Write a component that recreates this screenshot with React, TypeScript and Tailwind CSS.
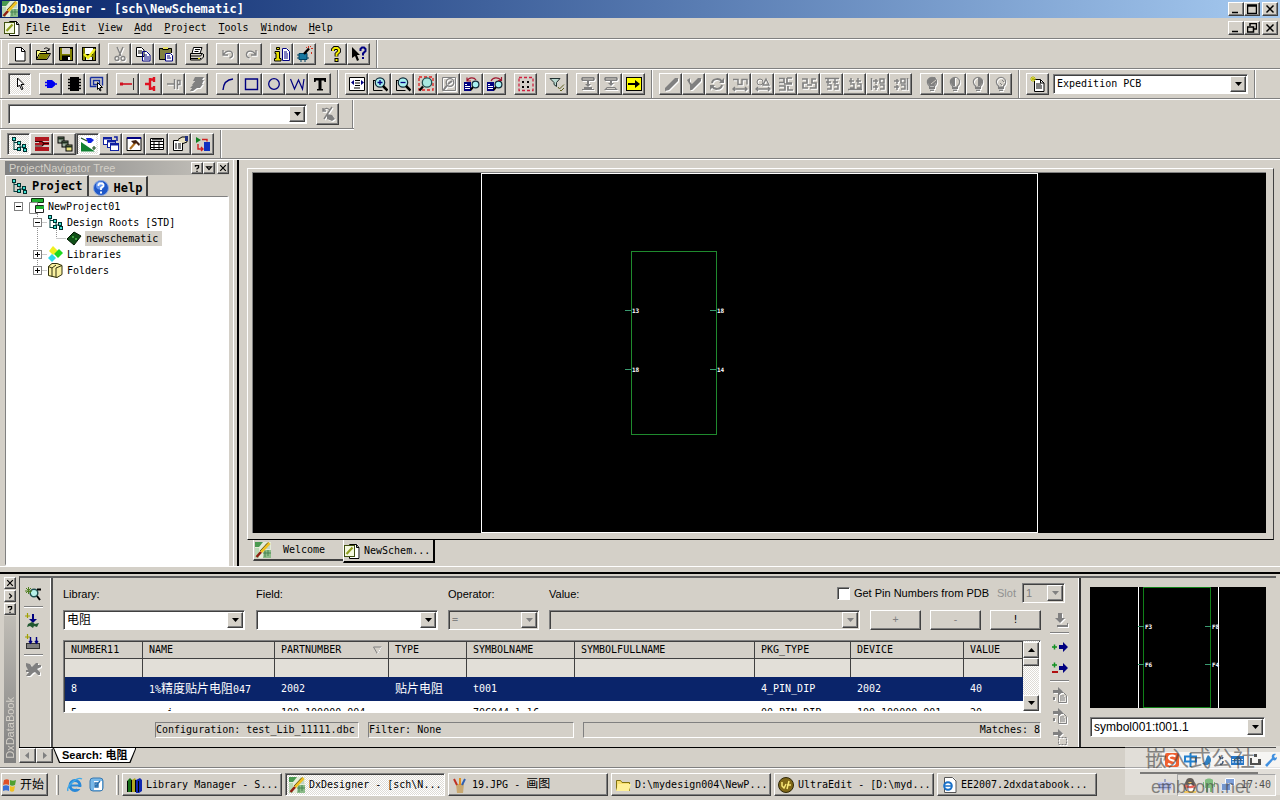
import React from "react";
import type { ReactNode } from "react";

const mono = "font-['DejaVu_Sans_Mono','Noto_Sans_CJK_SC',monospace]";
const sans = "font-['Liberation_Sans','Noto_Sans_CJK_SC',sans-serif]";
const raised =
  "border border-t-white border-l-white border-b-[#404040] border-r-[#404040] shadow-[inset_-1px_-1px_0_#808080]";
const sunken =
  "border border-t-[#808080] border-l-[#808080] border-b-white border-r-white shadow-[inset_1px_1px_0_#404040]";
const thinSunken = "border border-t-[#808080] border-l-[#808080] border-b-white border-r-white";
const dither = "bg-[repeating-conic-gradient(#ffffff_0_25%,#dedbd5_0_50%)] bg-[length:2px_2px]";

const f = (d: string, fill: string) => <path d={d} fill={fill} />;
const s = (d: string, stroke = "#000", w = 1) => <path d={d} fill="none" stroke={stroke} strokeWidth={w} />;

const G = "#808080";
const N = "#000080";
const lens = (
  <>
    {s("M1.500 4v10.500h9M1.500 4.500h2")}
    <circle cx="8" cy="6.500" r="4.700" fill="#a8f0f0" stroke="#102838" strokeWidth="1.200" />
    {s("M11 10l4.500 4.500", "#000", 2.500)}
  </>
);
const bulb = (inner: ReactNode) => (
  <>
    <path d="M5.500 10C3 8 3 5 4 3.500 6 0.500 10 0.500 12 3.500c1 1.500 1 4.500-1.500 6.500v1h-5z" fill="none" stroke={G} strokeWidth="1.200" />
    {inner}
    {f("M5 11h6v2H5zM6 13.500h4V15H6z", G)}
  </>
);
const rootsIcon = (
  <>
    {s("M3 3v11M3 6.500h5M3 13.500h5M9 7v4h4", "#004040")}
    {[[1, 1], [6, 5], [6, 11], [11, 8], [12, 12]].map(([x, y]) => (
      <rect key={`${x}-${y}`} x={x + 0.5} y={y + 0.5} width="3" height="3" fill="#40e0d0" stroke="#003030" />
    ))}
  </>
);
const pencilLogo = (
  <>
    {f("M0 0h16v16H0z", "#e4ecd8")}
    {f("M0 0h8l-4 5H0z", "#4a9a50")}
    {f("M9 8h7v8H8z", "#8cbc88")}
    {f("M10 2h5v5h-5z", "#c0d4c8")}
    {f("M0 6h4v10H0z", "#b9d8b4")}
    {s("M10 9v6M13 8v6M8 11h8", "#3a7a48", 0.800)}
    {s("M14.500 1L6 10", "#f0c020", 3)}
    {s("M6 10L1.500 15", "#902010", 2.600)}
    {s("M13 0.500L5 9", "#605010", 0.900)}
  </>
);
const schemDoc = (
  <>
    {f("M5 1h8l3 3v12H5z", "#fff")}
    {s("M5.500 1.500h7l2.500 3v11H5.500zM12.500 1.500v3H15", "#000")}
    <rect x="0.500" y="2.500" width="10" height="11" fill="#f4f8e0" stroke="#405010" />
    {s("M2.500 11l6-6.500", "#90a020", 2.200)}
  </>
);
const magDoc = (arrow: string) => (
  <>
    <rect x="0" y="6" width="7" height="9" fill={N} />
    {s("M1 8.500h2M1 10.500h5M1 12.500h5", "#fff")}
    <circle cx="11.500" cy="8.500" r="3.400" fill="#a8f0f0" stroke="#102838" strokeWidth="1.200" />
    {s("M9 11L6.500 14", "#000", 2)}
    {s(arrow, "#a01830", 1.200)}
  </>
);
const pageIn = (
  <>
    {s("M6.500 5.500h5l3 3v7h-8zM8 9h4M8 11h5M8 13h5", G)}
    {f("M1 3h5V0l5 4.500L6 9V6H1zM1 10h2v3H1z", G)}
  </>
);

const icons: Record<string, ReactNode> = {
  new: <>{f("M3 1h7l3 3v11H3z", "#fff")}{s("M3.500 1.500h6l3.500 3.500v10H3.500zM9.500 1.500v4H13")}</>,
  open: <>{f("M1 4h4l1 1h6v3H5l-4 6z", "#ffff80")}{s("M1.500 13.500v-9h3l1 1h6v2M1.500 13.500l3-6h11l-3.500 6zM9 3c2-2 4-1 5 1M14 2v2.500h-2.500")}{f("M5 8h9.500l-3 5H2.500z", "#808000")}</>,
  save: <>{f("M1 1h14v14H2L1 14z", "#000")}{f("M2 2h2v12H2zM12 3h2v11h-2zM4 8h8v1.500H4z", "#808000")}{f("M4 2h8v6H4z", "#d4d0c8")}{f("M10 11h2v3h-2z", "#fff")}</>,
  saveCheck: <>{f("M1 1h14v14H2L1 14z", "#000")}{f("M2 2h2v12H2zM12 3h2v11h-2zM4 9h8v2H4z", "#808000")}{f("M4 2h8v6H4z", "#fff")}{f("M5 11h6v3H5z", "#eee")}{s("M3 8l4 4 7-9", "#f0f020", 2.400)}</>,
  cut: <>{s("M5 1l4 9M11 1L7 10", G, 1.400)}<circle cx="5" cy="12.500" r="2" fill="none" stroke={G} strokeWidth="1.300" /><circle cx="11" cy="12.500" r="2" fill="none" stroke={G} strokeWidth="1.300" /></>,
  copy: <>{f("M1 1h6l2 2v8H1zM7 5h5l3 3v7H7z", "#fff")}{s("M1.500 1.500h5l2.500 2.500v6.500H1.500zM3 5h4M3 7h4")}{s("M7.500 5.500h4l3.500 3.500v6H7.500zM9 9h3M9 11h5M9 13h5", N)}</>,
  paste: <>{f("M1 2h13v12H1z", "#808040")}{s("M1.500 2.500h12v11h-12z")}{f("M5 1h5v3H5z", "#e8e060")}{s("M4.500 3.500h6")}{f("M7 7h8v8H7z", "#fff")}{s("M7.500 7.500h5l2 2v5.500h-7zM9 10h3M9 12h4", N)}</>,
  print: <>{f("M4 1h9l-2 6H3z", "#fff")}{s("M4.500 1.500h8.500l-2 6H3zM6 3.500h5M5.500 5.500h4")}{f("M1 7h13l1 2v4l-2 2H2l-1-2z", "#d4d0c8")}{s("M1.500 7.500h12l-2 2.500h-10zM1.500 10v4h10l3-3V8M2 12.500h10")}{f("M9 12h2v1H9z", "#e0e000")}</>,
  undo: <>{s("M3 4v5h5M3.500 8.500C6 4 12 4 12.500 8c.3 2-1 3.500-3 4", G, 1.300)}</>,
  redo: <>{s("M13 4v5H8M12.500 8.500C10 4 4 4 3.500 8c-.3 2 1 3.500 3 4", G, 1.300)}</>,
  info: <>{f("M2 1h4v3H2zM1 6h5v7h1v2H0v-2h2V8H1z", "#e8e000")}{s("M2.500 1.500h3v2h-3zM1 5.500h4.500v7H7v2.500H.5v-2.500H2v-5H1z")}{f("M8 2h5l3 3v10H8z", "#fff")}{s("M8.500 2.500h4l3 3v9h-7zM10 6h3M10 8h4M10 10h4M10 12h4", N)}</>,
  wizard: <>{f("M2 7h8v7H2z", "#1878a0")}{s("M2 7.500h8v6H2zM0 9h2M0 12h2M4 14v2M8 14v2M10 12h2", "#004060")}{s("M7 8l5-5.500", "#000", 2.400)}{f("M11 0h1v2h-1zM14 2h2v1h-2zM9 1h1v1H9zM14 6h1v2h-1zM13 0h1v1h-1z", "#d03020")}</>,
  help: <>{s("M5 5V3.500L6.500 2h3L11 3.500v2L8.500 8v2.500", "#000", 3.800)}{s("M5 5V3.500L6.500 2h3L11 3.500v2L8.500 8v2.500", "#f0e800", 2)}{f("M6.500 12h4v4h-4z", "#000")}{f("M7.500 13h2v2h-2z", "#f0e800")}</>,
  whats: <>{f("M1 1l8 8H6l2 5-2 1-2-5-3 2z", "#000")}{s("M9.500 5V3l1.500-1.500h2L14.500 3v2L12 7.500v2", N, 2)}{f("M11 11h2v2h-2z", N)}</>,
  arrow: <>{f("M5 2l7 7H9l2 4-1.500 1-2-4.500L5 11z", "#fff")}{s("M5.500 2v9l2-2 2 4.500 1.500-.5-2-4.500h3z")}</>,
  gate: <>{f("M4 4h5l3 2.500v3L9 12H4z", "#0000f0")}{s("M2 6.500h2M2 9.500h2M12 8h2", "#0000f0", 1.300)}</>,
  chip: <>{f("M4 1h9v14H4z", "#000")}{s("M2 3.500h13M2 6.500h13M2 9.500h13M2 12.500h13", "#000", 1.500)}</>,
  blockSel: <>{s("M1.500 1.500h12v8M1.500 1.500v9h6M4.500 4.500h6v4h-6z", "#1830a0", 1.400)}{f("M8 6l6 6h-3l1 3-1.500.5-1-3L8 14z", "#fff")}{s("M8.500 6.500v7l1.500-1.500 1 3 1-.5-1-3h2.500z")}</>,
  net: <>{s("M1 8h11", "#d01020", 1.600)}{f("M0 6.500h3v3H0z", "#d01020")}{s("M13.500 2v12", "#303030")}</>,
  bus: <>{s("M7 2v12M7 3.500h4M7 12.500h4M2 8h5M11 1v5M11 10v5", "#e01020", 2.400)}</>,
  probe: <>{s("M1 8h7M8.500 3v10M11.500 13V4.500h2.500v4h-2.500", G, 1.400)}</>,
  ripper: <>{f("M6 1h9l-2 3h2l-2 4h1l-3 4H8l-4 3H1l2-3H1l3-3H3l3-4H4z", G)}</>,
  arc: s("M3 14C3.500 7 7 3.500 13 3", N, 1.400),
  rect: s("M2.500 3h12v10.500h-12z", N, 1.400),
  circle: <circle cx="8" cy="8" r="5.300" fill="none" stroke={N} strokeWidth="1.300" />,
  zig: s("M1.500 3l4 10 4-9 4 9 1.500-10", N, 1.200),
  text: f("M2 2h12v4h-1.500L12 4.500H9.500V13H11v1.500H5V13h1.500V4.500H4L3.500 6H2z", "#000"),
  fit: <>{f("M1 2h14v12H1z", "#fff")}{s("M.5 1.500h15v13H.5z")}{s("M6 4.500h5M6 7h5M6 9.500h5M5 12h6")}{f("M2 6.500l3-2.500v5zM15 6.500L12 4v5z", N)}</>,
  zoomIn: <>{lens}{s("M8 4v5M5.500 6.500h5", N, 1.300)}</>,
  zoomOut: <>{lens}{s("M5.500 6.500h5", N, 1.300)}</>,
  zoomArea: <><rect x="1" y="1" width="14" height="13" fill="none" stroke="#e02020" strokeWidth="1.300" strokeDasharray="3 2" /><circle cx="9" cy="6.500" r="4.700" fill="#a8e8e0" stroke="#205050" strokeWidth="1.300" />{s("M5 10.500l-3.500 4", "#000", 2.300)}</>,
  zoomSel: <>{s("M1.500 1.500h13v13h-13z", G)}<circle cx="9" cy="6.500" r="3.800" fill="none" stroke={G} strokeWidth="1.300" />{s("M6 9.500L2.500 14M7 8l4-3", G, 2)}</>,
  prev: magDoc("M3 5c2-4 7-4 9-1M3 1.500V5h4"),
  next: magDoc("M4 5c2-4 7-4 10-1M14.500 1v3.500H11"),
  grid: <><rect x="1" y="1.500" width="14" height="13" fill="none" stroke="#d02040" strokeWidth="1.300" strokeDasharray="3 2" />{f("M4 5h2v2H4zM9 5h2v2H9zM4 10h2v2H4zM9 10h2v2H9z", "#000")}</>,
  filter: <>{f("M1 2h10L7.500 6v4L5 8V6z", "#b8d8d0")}{s("M1 2.500h10L7.500 6.500v4L5 8.500v-2z", "#203030")}{s("M9 11l1.500 2L15 8.500M11 14l1 1 3-3", "#606020")}</>,
  down1: <>{f("M2 1h12l1 2-1 2H2L1 3zM7 5h2v3h2l-3 3-3-3h2zM4 11h8v2h2v1H2v-1h2z", G)}{s("M3 3h10", "#d4d0c8")}</>,
  down2: <>{f("M2 1h12l1 2-1 2H2L1 3zM7 5h2v2h2L8 10 5 7h2zM4 11h8l3 3H1z", G)}{s("M3 3h10M4 12.500h8", "#d4d0c8")}</>,
  go: <>{f("M0 1h16v14H0z", "#000")}{f("M1 2h14v12H1z", "#ffff00")}{s("M2 8h9", "#000", 2)}{f("M9 4l5 4-5 4z", "#000")}</>,
  pen: f("M12 2h3v3l-9 9-4 1v-3z", G),
  penV: f("M1 4l3-2v4l2 2 6-6h3v3l-9 9H4V9z", G),
  cyc: <>{s("M3 7C4 2 11 2 13 6M13 9c-1 5-8 5-10 1", G, 2)}{f("M10 7h5V2zM6 9H1v5z", G)}</>,
  w1: s("M1 3.500h5v5h4v-5h5v5M1 13h13M3 11l-2 2 2 2M13 11l2 2-2 2", G, 1.500),
  w2: <>{s("M1 13h13M3 11l-2 2 2 2M13 11l2 2-2 2M8 9l3-6 3 6z", G, 1.300)}<circle cx="5" cy="6" r="3" fill="none" stroke={G} /></>,
  w3: s("M1 2.500h5v4H1M9 2h5M9 2v5h5M1 10h6v4H1M10 10v4h5M6 8h8", G, 1.700),
  w4: s("M1 3h5v4H2v5h5M15 3h-4v4h4v5H9M6 9h5", G, 1.700),
  w5: s("M1 2.500h14M4 3v5M11 3v5M2 6h5M9 6h5M3 9h4v4H3M10 9h4v4h-4", G, 1.500),
  w6: s("M1 13.500h14M4 2v5M11 2v5M2 5h5M9 5h5M3 8h4v4H3M10 8h4v4h-4", G, 1.500),
  w7: s("M1.500 2v12M3 5h5M3 11h5M6 3v5M6 9v5M10 3h4v4h-4zM10 9h4v4h-4", G, 1.500),
  w8: s("M14.500 2v12M1 5h5M1 11h5M4 3v5M4 9v5M8 3h4v4H8zM8 9h4v4H8", G, 1.500),
  bulb1: bulb(<>{f("M5 2l6-1 2 4-3 5H6L3 6z", G)}{s("M7 8l5-4", "#d4d0c8")}</>),
  bulb2: bulb(f("M8 1v9H6L3 6l1-3z", G)),
  bulb3: bulb(f("M8 1v9h2l3-4-1-3z", G)),
  bulb4: bulb(s("M9 4l2 2M7 7l2 2", G)),
  brush: <>{s("M3 5c2-4 6-3 7 0M3 2v3h3M12 1L4 13", G, 1.400)}{f("M7 8l5 1 3 4-3 2-5-2z", G)}</>,
  newPage: <>{f("M4 3h7l3 3v10H4z", "#fff")}{s("M4.500 3.500h6l3.500 3.500v8.500H4.500zM6 8h5M6 10h6M6 12h6M10.500 3.500V7H14")}{s("M0 3h6M3 0v6M1 1l4 4M5 1L1 5", "#c0c000")}</>,
  roots: rootsIcon,
  layers: <>{f("M1 1h14v4H1zM1 7h9v2H1zM5 6h10v3H5zM1 11h14v4H1z", "#b01820")}{s("M1 5.500h7l2 2h5M1 10h7l2-2", "#300", 1.200)}</>,
  cascade: <>{[[1, 1], [5, 5], [9, 9]].map(([x, y]) => <g key={x}><rect x={x} y={y} width="6" height="6" fill={x === 9 ? "#e8e080" : "#a0b0a0"} stroke="#000" />{s(`M${x} ${y + 1.5}h6`, "#203020", 2)}</g>)}</>,
  scene: <>{f("M0 0h16v16H0z", "#fff")}{f("M1 6l14 9.500H1z", "#108030")}{f("M6 2h5l3 2-3 3H8z", "#1020e0")}{s("M1 2l6 3M12 12h4M14 10v4", "#205020", 1.200)}</>,
  windows: <>{[[0, 1], [4, 4], [7, 7]].map(([x, y]) => <g key={x}><rect x={x + 0.5} y={y + 0.5} width="8" height="7" fill="#fff" stroke="#1020a0" />{s(`M${x} ${y + 1.5}h9`, "#1020a0", 2)}</g>)}{s("M11 1h3v4", "#1020a0", 1.500)}</>,
  hammer: <>{f("M1 2h14v13H1z", "#fff")}{s("M1 1.500h14v13H1z", "#000")}{f("M1 1h14v2H1z", N)}{s("M4 13l6-7", "#b07020", 2)}{f("M5 5l5-1 4 4-1 2-3-3-2 1z", "#402010")}</>,
  calendar: <>{f("M1 2h14v12H1z", "#fff")}{s("M1.500 2.500h13v11h-13zM1 5.500h14M1 8.500h14M1 11.500h14M5 5v9M10 5v9M3 3.800h10")}</>,
  props: <>{f("M1 4h10v11H1z", "#fff")}{s("M1.500 4.500h9v10h-9zM3 8h2M6 8h3M3 10h2M6 10h3M3 12h2M6 12h3")}{f("M6 3l4-2h5v5l-4 1-4-1z", "#e8e0c0")}{s("M6 3.500L10 1h5v5l-4 1.500")}{f("M13 0h3v5h-3z", "#203080")}</>,
  swap: <>{f("M1 1l5 3-5 3z", "#108020")}{f("M9 6h6v9H9z", "#1030c0")}{s("M7 3.500h5v2M3 8v5h5M6 11l2 2-2 2", "#d02020", 1.400)}</>,
  helpBall: <><circle cx="8" cy="8" r="7.500" fill="#2058c8" stroke="#90a8d8" /><circle cx="7" cy="5.500" r="4" fill="#6898f0" />{s("M5.500 6V4.500l1-1h3l1 1v1.500L8 8v2", "#fff", 1.800)}{f("M7 11.500h2v2H7z", "#fff")}</>,
  project: <>{f("M4 1h12v3H4z", "#20b030")}{s("M3.500.5h12v4h-12z", "#103010")}{f("M1 6h8v9H1z", "#fff")}{s("M1.500 4.500h8v11h-8z", "#888")}{f("M8 8h8v7H8z", "#fff")}{s("M7.500 7.500h8v7h-8z", "#222")}{f("M8 8h8v3H8z", "#20b030")}</>,
  board: <>{f("M1 9l7-7 7 4-7 9z", "#105018")}{s("M1 9l7-7 7 4-7 9z", "#001800")}{f("M6 6h2v2H6zM9 8h2v2H9z", "#40a040")}</>,
  libs: <>{f("M6 0l5 5-5 4-4-4z", "#f0f020")}{f("M12 3l4 4-5 5-4-4z", "#20d820")}{f("M5 8l4 4-4 4-4-4z", "#30d8e8")}</>,
  folders: <>{f("M1 4l4-3h6l4 2v9l-5 4-9-2z", "#f8f0a0")}{s("M1.500 4.500L5 1.500h5l5 2v9l-5 3-8.500-2zM1.500 4.500L5 6v9M5 6l4-3M9 6v9.500M9 6l6-2.500", "#303010")}</>,
  findStar: <><circle cx="9" cy="7" r="3.800" fill="#b8f0e8" stroke="#205050" strokeWidth="1.500" />{s("M12 10l3 4M12 3.500h4", "#000", 2)}{s("M0 5h7M3.500 1v7M1 2l5 5M6 2L1 7", "#508020")}</>,
  placeStar: <>{s("M0 3h5M2.500 0v5", "#a0a000", 1.200)}{f("M7 1h2v5h3L8 10 4 6h3z", N)}{f("M3 11l4-2 3 2 4-1-2 4-3-1-1 2-3-2-3 1z", "#205830")}</>,
  gridStar: <>{s("M0 3h5M2.500 0v5", "#a0a000", 1.200)}{f("M1 9h14v6H1z", "#303030")}{s("M2 11h12M2 13h12", "#ccc")}{s("M5.500 3v6M11.500 3v6M4 7l1.500 2L7 7M10 7l1.500 2L13 7", N, 1.400)}</>,
  killed: f("M1 2l4 1 2 3 4-4h2v2h3v2l-4 2 3 3v3h-2l-3-3-2 1-3 3H1l3-4H1V9h2L1 5z", G),
  dropDown: f("M6 1h4v5h3L8 11 3 6h3zM5 13h10v-2h1v4H5z", G),
  addRight: <>{f("M7 6h4V3l5 5-5 5v-3H7z", N)}{s("M0 8h5M2.500 5.500v5", "#109020", 1.500)}</>,
  swapRight: <>{f("M7 6h4V3l5 5-5 5v-3H7z", N)}{s("M0 5h5M2.500 2.500v5", "#109020", 1.500)}{s("M0 12h6", "#b01010", 2)}</>,
  pageA: pageIn,
  pageB: pageIn,
  pageC: <>{f("M1 3h5V0l5 4.500L6 9V6H1z", G)}<rect x="6.500" y="8.500" width="8" height="7" fill="none" stroke={G} strokeDasharray="2 1" /></>,
  logo: pencilLogo,
  schem: schemDoc,
  flag: <>{f("M2 3c2-1 4-1 5 0v5c-2-1-4-1-6 0z", "#e05028")}{f("M8 3c2 1 4 1 6 0l-1 5c-2 1-4 1-5 0z", "#50a030")}{f("M1 9c2-1 4-1 6 0v5c-2-1-4-1-6 0z", "#3870d8")}{f("M8 9c2 1 3 1 5 0l-1 5c-1 1-3 1-4 0z", "#f0c020")}</>,
  ie: <><circle cx="8" cy="8.500" r="5" fill="none" stroke="#2888d8" strokeWidth="3" />{s("M4 8.500h9", "#2888d8", 2)}{f("M10 10h5v2h-5z", "#d4d0c8")}{s("M1 14C-1 10 10-1 15 2", "#40a8e8", 1.400)}</>,
  desk: <><rect x="1" y="1" width="13" height="13" rx="3" fill="#78b8e8" stroke="#3878b0" />{f("M5 4h8v9H5z", "#fff")}{s("M6 10l5-6M6 6h3v4H6z", "#2870b0", 1.400)}</>,
  books: <>{f("M1 4l3-3 2 2v12H1z", "#187018")}{f("M6 3l3-2 1 2v12H6z", "#b0a820")}{f("M10 3l4-2 2 2v11l-3 2h-3z", "#1028b0")}{s("M1.500 4v11M5.500 3v12M9.500 3v12M12.500 4v11")}</>,
  paint: <>{f("M4 7h8l-1 9H5z", "#c8a870")}{s("M5 8L2 2", "#c03020", 2)}{s("M8 8V1", "#e09020", 2)}{s("M10 8l3-6", "#3060b0", 2)}</>,
  folder: <>{f("M1 3h5l1 2h8v9H1z", "#f8e070")}{s("M1.500 3.500h4l1.500 2h7.500v8h-13z", "#807010")}{f("M3 7h13l-2 7H1z", "#fff098")}</>,
  ultra: <><circle cx="8" cy="8" r="7.500" fill="#806818" stroke="#302808" />{s("M4 5v4l2 2 2-4M9 12l2-8M9 8h4", "#f8e878", 1.500)}</>,
  iePage: <>{f("M3 0h9l3 3v13H3z", "#fff")}{s("M3.500.5h8l3.500 3.500v11.500H3.500z", "#555")}<circle cx="7" cy="9" r="3.800" fill="none" stroke="#1870c8" strokeWidth="2" />{s("M4 9h7", "#1870c8", 1.500)}</>,
  keyboard: <>{f("M1 5h14v8H1z", "#b0b8e8")}{s("M2 7.500h12M2 10.500h12M8 5V2", "#405098", 1.300)}</>,
  penguin: <><ellipse cx="8" cy="9" rx="6" ry="6.500" fill="#302820" /><circle cx="8" cy="5" r="4" fill="#201810" /><ellipse cx="8" cy="11" rx="3.500" ry="4" fill="#fff" />{s("M3 8.500c3 2 7 2 10 0", "#e02818", 2.200)}{f("M6 5h4l-2 2zM2 14h12v2H2z", "#f0b020")}</>,
  phone: <>{f("M4 3c2-2 6-2 8 0v8H4zM2 5h1v5H2zM13 5h1v5h-1zM5 11h2v4H5zM9 11h2v4H9z", "#48a048")}</>,
  screens: <>{f("M5 1h10v8H5z", "#4878c8")}{s("M5.500 1.500h9v7h-9z", "#fff")}{f("M1 6h10v8H1z", "#3868b8")}{s("M1.500 6.500h9v7h-9zM3 15.500h6", "#c8d8f0")}</>,
};

const greyed = new Set([
  "cut", "undo", "redo", "probe", "ripper", "zoomSel", "down1", "down2", "pen", "penV", "cyc",
  "w1", "w2", "w3", "w4", "w5", "w6", "w7", "w8", "bulb1", "bulb2", "bulb3", "bulb4", "brush",
  "killed", "dropDown", "pageA", "pageB", "pageC",
]);

function Icon({ name }: { name: string }) {
  return (
    <svg
      viewBox="0 0 16 16"
      aria-hidden="true"
      className={`h-4 w-4 shrink-0 ${greyed.has(name) ? "drop-shadow-[1px_1px_0_#ffffff]" : ""}`}
    >
      {icons[name]}
    </svg>
  );
}

function ToolButton({ name, pressed }: { name: string; pressed?: boolean }) {
  return (
    <button
      aria-label={name}
      className={`flex h-[22px] w-[23px] shrink-0 items-center justify-center ${pressed ? `${sunken} ${dither}` : raised}`}
    >
      <Icon name={name} />
    </button>
  );
}

function Groups({ groups, pressed = [] }: { groups: string[][]; pressed?: string[] }) {
  return (
    <div className="flex gap-2">
      {groups.map((g) => (
        <div key={g[0]} className="flex">
          {g.map((n) => <ToolButton key={n} name={n} pressed={pressed.includes(n)} />)}
        </div>
      ))}
    </div>
  );
}

function Band({ children, className = "" }: { children: ReactNode; className?: string }) {
  return (
    <div className={`flex items-center gap-1 border-r border-l border-l-white border-r-[#808080] px-[6px] shadow-[1px_0_0_#ffffff] ${className}`}>
      {children}
    </div>
  );
}

function Arrow({ dir = "down", muted }: { dir?: string; muted?: boolean }) {
  const d = dir === "down" ? "M0 1h7L3.500 5z" : dir === "up" ? "M0 5h7L3.500 1z" : dir === "left" ? "M5 0v7L1 3.500z" : "M2 0v7l4-3.500z";
  return (
    <svg viewBox="0 0 7 7" className="h-[7px] w-[7px]" aria-hidden="true">
      <path d={d} fill={muted ? "#808080" : "#000"} />
    </svg>
  );
}

function Combo({ label, id, value, disabled, className = "", font = mono }: {
  label?: string; id: string; value: string; disabled?: boolean; className?: string; font?: string;
}) {
  return (
    <div className={`relative flex h-5 ${sunken} ${disabled ? "bg-[#d4d0c8]" : "bg-white"} ${className}`}>
      <select
        id={id}
        aria-label={label}
        disabled={disabled}
        className={`w-full appearance-none bg-transparent pr-5 pl-[3px] outline-none ${font} ${disabled ? "text-[#808080]" : "text-black"}`}
      >
        <option>{value}</option>
      </select>
      <span className={`pointer-events-none absolute top-px right-px bottom-px flex w-4 items-center justify-center bg-[#d4d0c8] ${raised}`}>
        <Arrow muted={disabled} />
      </span>
    </div>
  );
}

function WinButton({ label, d, small }: { label: string; d: string; small?: boolean }) {
  return (
    <button
      aria-label={label}
      className={`flex items-center justify-center bg-[#d4d0c8] ${raised} ${small ? "h-3 w-3" : "h-[14px] w-4"}`}
    >
      <svg viewBox="0 0 10 10" className={small ? "h-2 w-2" : "h-[10px] w-[10px]"} aria-hidden="true">
        <path d={d} fill="none" stroke="#000" strokeWidth="1.500" />
      </svg>
    </button>
  );
}

const CLOSE = "M1.500 1.500l7 7M8.500 1.500l-7 7";
const QUESTION = "M3 3.500V2h4v2.500L5 6v1M5 8.500V10";

const Rule = () => <div className="h-[2px] w-full border-t border-b border-t-[#808080] border-b-white" />;

type Cell = "blank" | "line" | "elbow" | "minus" | "plus" | "plusEnd" | "root";
function TreeCell({ kind }: { kind: Cell }) {
  const box = kind === "minus" || kind === "plus" || kind === "plusEnd" || kind === "root";
  const line =
    kind === "line" || kind === "minus" || kind === "plus" ? "M9.500 0v16" :
    kind === "plusEnd" || kind === "elbow" ? "M9.500 0v8" : "";
  return (
    <svg viewBox="0 0 19 16" className="h-4 w-[19px] shrink-0" aria-hidden="true">
      <path d={line} stroke="#909090" strokeDasharray="1 1" />
      {kind !== "blank" && kind !== "line" && kind !== "root" && (
        <path d="M9.500 8.500H19" stroke="#909090" strokeDasharray="1 1" />
      )}
      {box && <rect x="5.500" y="4.500" width="8" height="8" fill="#fff" stroke="#808080" />}
      {box && <path d={kind === "plus" || kind === "plusEnd" ? "M7 8.500h5M9.500 6v5" : "M7 8.500h5"} stroke="#000" />}
    </svg>
  );
}

const tree: { cells: Cell[]; icon: string; text: string; selected?: boolean }[] = [
  { cells: ["root"], icon: "project", text: "NewProject01" },
  { cells: ["blank", "minus"], icon: "roots", text: "Design Roots [STD]" },
  { cells: ["blank", "line", "elbow"], icon: "board", text: "newschematic", selected: true },
  { cells: ["blank", "plus"], icon: "libs", text: "Libraries" },
  { cells: ["blank", "plusEnd"], icon: "folders", text: "Folders" },
];

function Pins({ pins }: { pins: { x: number; y: number; t: string }[] }) {
  return (
    <>
      {pins.map((p) => (
        <g key={`${p.x}-${p.y}`}>
          <path d={`M${p.x} ${p.y}.500h6`} stroke="#3a9a70" />
          <text x={p.x + 7} y={p.y + 3} fill="#fff" fontSize="6" fontWeight="bold" fontFamily="DejaVu Sans Mono">{p.t}</text>
        </g>
      ))}
    </>
  );
}

const columns: { name: string; width: string }[] = [
  { name: "NUMBER11", width: "w-[78px]" },
  { name: "NAME", width: "w-[132px]" },
  { name: "PARTNUMBER", width: "w-[114px]" },
  { name: "TYPE", width: "w-[78px]" },
  { name: "SYMBOLNAME", width: "w-[108px]" },
  { name: "SYMBOLFULLNAME", width: "w-auto" },
  { name: "PKG_TYPE", width: "w-[96px]" },
  { name: "DEVICE", width: "w-[113px]" },
  { name: "VALUE", width: "w-[59px]" },
];
const cjk = (t: string) => <span className="text-[12px]">{t}</span>;
const rowA: ReactNode[] = ["8", <>1%{cjk("精度贴片电阻")}047</>, "2002", cjk("贴片电阻"), "t001", "", "4_PIN_DIP", "2002", "40"];
const rowB: ReactNode[] = ["5", "   i", "100-100000-004", "", "70C044-l-l6", "", "00_PIN_DIP", "100-100000-001", "20"];

const tasks: { icon: string; text: ReactNode; active?: boolean }[] = [
  { icon: "books", text: "Library Manager - S..." },
  { icon: "logo", text: "DxDesigner - [sch\\N...", active: true },
  { icon: "paint", text: <>19.JPG - {cjk("画图")}</> },
  { icon: "folder", text: "D:\\mydesign004\\NewP..." },
  { icon: "ultra", text: "UltraEdit - [D:\\myd..." },
  { icon: "iePage", text: "EE2007.2dxdatabook..." },
];

function TitleBar() {
  return (
    <header>
      <div className="flex h-[18px] items-center gap-[2px] bg-gradient-to-r from-[#0a246a] to-[#a6caf0] pr-[2px] pl-[2px] text-white">
        <Icon name="logo" />
        <h1 className="flex-1 text-[12px] leading-4 font-bold">DxDesigner - [sch\NewSchematic]</h1>
        <div className="flex">
          <WinButton label="Minimize" d="M1 8.500h6" />
          <WinButton label="Maximize" d="M.5 1h9v8.500h-9zM.5 2h9" />
          <span className="w-[2px]" />
          <WinButton label="Close" d={CLOSE} />
        </div>
      </div>
      <div className="flex h-5 items-center pr-[2px] pl-1">
        <Icon name="schem" />
        <nav className="flex flex-1 gap-3 pl-[6px]">
          {["File", "Edit", "View", "Add", "Project", "Tools", "Window", "Help"].map((m) => (
            <button key={m}><u className="underline-offset-2">{m[0]}</u>{m.slice(1)}</button>
          ))}
        </nav>
        <div className="flex">
          <WinButton label="Minimize document" d="M1 8.500h6" />
          <WinButton label="Restore document" d="M3 3V.5h6.500V6H7M.5 4h6v5h-6z" />
          <span className="w-[2px]" />
          <WinButton label="Close document" d={CLOSE} />
        </div>
      </div>
    </header>
  );
}

function Toolbars() {
  return (
    <section aria-label="Toolbars">
      <Rule />
      <div className="flex h-7 pl-px">
        <Band><Groups groups={[["new", "open", "save", "saveCheck"], ["cut", "copy", "paste"], ["print"], ["undo", "redo"], ["info", "wizard"], ["help", "whats"]]} /></Band>
      </div>
      <Rule />
      <div className="flex h-7 pl-px">
        <Band><Groups pressed={["arrow"]} groups={[["arrow"], ["gate", "chip", "blockSel"], ["net", "bus", "probe", "ripper"], ["arc", "rect", "circle", "zig", "text"]]} /></Band>
        <Band><Groups groups={[["fit", "zoomIn", "zoomOut", "zoomArea", "zoomSel", "prev", "next"], ["grid"], ["filter"], ["down1", "down2", "go"]]} /></Band>
        <Band><Groups groups={[["pen", "penV", "cyc", "w1", "w2", "w3", "w4", "w5", "w6", "w7", "w8"], ["bulb1", "bulb2", "bulb3", "bulb4"]]} /></Band>
        <Band><ToolButton name="newPage" /><Combo id="flow" label="Design flow" value="Expedition PCB" className="w-[195px]" /></Band>
      </div>
      <Rule />
      <div className="flex h-7 pl-px">
        <Band className="w-[352px]">
          <Combo id="command" label="Command" value="" className="mr-[5px] w-[299px]" />
          <ToolButton name="brush" />
        </Band>
      </div>
      <div className="w-[354px]"><Rule /></div>
      <div className="flex h-7">
        <Band><Groups pressed={["roots", "scene"]} groups={[["roots", "layers", "cascade", "scene", "windows", "hammer", "calendar", "props", "swap"]]} /></Band>
      </div>
      <Rule />
    </section>
  );
}

function Navigator() {
  return (
    <aside className="flex w-[233px] shrink-0 flex-col pt-px pr-1 pl-[5px]">
      <div className={`flex h-[14px] items-center bg-gradient-to-r from-[#808080] to-[#c8c5be] pl-1 text-[11px] text-[#d4d0c8] ${sans}`}>
        <h2 className="flex-1">ProjectNavigator Tree</h2>
        <WinButton small label="Panel help" d={QUESTION} />
        <WinButton small label="Panel menu" d="M2 3.500h6L5 7z" />
        <span className="w-[2px]" />
        <WinButton small label="Close panel" d={CLOSE} />
      </div>
      <div className="flex h-[21px] items-end text-[12px] font-bold">
        <button className="flex h-[21px] items-center gap-[5px] border-t border-r-2 border-l border-t-white border-l-white border-r-[#404040] pr-1 pl-[5px]">
          <Icon name="roots" />Project
        </button>
        <button className="flex h-5 items-center gap-[5px] border-t border-r-2 border-t-white border-r-[#404040] pt-[2px] pr-1 pl-1">
          <Icon name="helpBall" />Help
        </button>
      </div>
      <div className={`flex-1 bg-white px-[3px] pt-px ${thinSunken} border-r-2 border-b-2 border-b-[#808080] border-r-[#808080]`}>
        <ul>
          {tree.map((t) => (
            <li key={t.text} className="flex h-4 items-center">
              {t.cells.map((c, i) => <TreeCell key={i} kind={c} />)}
              <Icon name={t.icon} />
              <span className={`ml-[3px] px-px leading-[15px] ${t.selected ? "bg-[#d4d0c8] pr-1" : ""}`}>{t.text}</span>
            </li>
          ))}
        </ul>
      </div>
    </aside>
  );
}

function Editor() {
  return (
    <main className="flex min-w-0 flex-1 flex-col border-l-2 border-l-black pt-2 pr-[6px] pl-2">
      <div className="flex min-h-[372px] flex-1 border border-t-white border-r-[#404040] border-b-black border-l-white pt-[3px] pr-[7px] pb-[6px] pl-[4px]">
        <div className="flex flex-1 items-stretch justify-center border-t border-l border-[#808080] bg-black">
          <svg viewBox="0 0 557 360" className="w-[557px]" role="img" aria-label="Schematic sheet">
            <rect x="0.500" y="0.500" width="556" height="359" fill="none" stroke="#fff" />
            <rect x="150.500" y="78.500" width="85" height="183" fill="none" stroke="#1f8a2e" />
            <Pins pins={[{ x: 144, y: 137, t: "13" }, { x: 229, y: 137, t: "18" }, { x: 144, y: 196, t: "18" }, { x: 229, y: 196, t: "14" }]} />
          </svg>
        </div>
      </div>
      <div className="flex h-[26px] items-start pl-[6px]">
        <button className="flex h-[21px] w-[90px] items-center gap-3 border-b-2 border-l border-b-[#404040] border-l-white pl-px">
          <Icon name="logo" />Welcome
        </button>
        <button className="flex h-[23px] w-[92px] items-center gap-1 border-r-2 border-b-2 border-l border-r-black border-b-black border-l-white">
          <Icon name="schem" />NewSchem...
        </button>
      </div>
    </main>
  );
}

function Field({ label, id, children, className }: { label: string; id: string; children: ReactNode; className: string }) {
  return (
    <div className={`flex flex-col gap-2 ${className}`}>
      <label htmlFor={id} className={`text-[11px] leading-4 ${sans}`}>{label}</label>
      {children}
    </div>
  );
}

const Groove = () => <div className="my-[2px] h-[2px] w-[19px] border-t border-b border-t-[#808080] border-b-white" />;

function IconButton({ name }: { name: string }) {
  return <button aria-label={name} className="flex h-[21px] w-5 items-center justify-center"><Icon name={name} /></button>;
}

function DataBook() {
  return (
    <section aria-label="DxDataBook" className="flex border-t-2 border-t-black pt-[2px] pr-1 pl-1">
      <div className="flex w-3 shrink-0 flex-col gap-px pt-px">
        <WinButton small label="Close DxDataBook" d={CLOSE} />
        <WinButton small label="Collapse DxDataBook" d="M4 2l3 3-3 3" />
        <WinButton small label="DxDataBook help" d={QUESTION} />
        <div className="flex flex-1 items-end justify-center bg-gradient-to-t from-[#808080] to-[#c0bdb6] pb-1">
          <span className={`rotate-180 text-[11px] leading-3 text-[#d4d0c8] [writing-mode:vertical-rl] ${sans}`}>DxDataBook</span>
        </div>
      </div>
      <div className="ml-[3px] flex min-w-0 flex-1 flex-col">
        <div className="flex border-t-2 border-l border-t-[#606060] border-l-[#404040]">
          <div className="flex w-[31px] shrink-0 flex-col items-center border-r border-r-white pt-[5px] pr-1">
            <IconButton name="findStar" />
            <Groove />
            <IconButton name="placeStar" />
            <IconButton name="gridStar" />
            <Groove />
            <IconButton name="killed" />
          </div>
          <div className="flex min-w-0 flex-1 border-r border-l-2 border-r-white border-l-[#505050]">
            <div className="flex min-w-0 flex-1 flex-col pt-2 pl-[10px]">
              <div className="relative flex items-end gap-[10px]">
                <Field label="Library:" id="library" className="w-[182px]">
                  <Combo id="library" value="电阻" font={`text-[12px] ${sans}`} />
                </Field>
                <Field label="Field:" id="field" className="ml-px w-[182px]">
                  <Combo id="field" value="" />
                </Field>
                <Field label="Operator:" id="operator" className="w-[91px]">
                  <Combo id="operator" value="=" disabled />
                </Field>
                <Field label="Value:" id="value" className="min-w-[100px] flex-1">
                  <Combo id="value" value="" disabled />
                </Field>
                <div className="flex gap-[9px]">
                  {["+", "-", "!"].map((b) => (
                    <button key={b} className={`h-5 w-[51px] leading-4 ${raised} ${b === "!" ? "" : "text-[#808080]"}`}>{b}</button>
                  ))}
                </div>
                <div className={`absolute -top-[3px] -right-6 flex items-center text-[11px] ${sans}`}>
                  <input id="pins" type="checkbox" className={`mr-1 h-[13px] w-[13px] appearance-none bg-white ${sunken}`} />
                  <label htmlFor="pins">Get Pin Numbers from PDB</label>
                  <label htmlFor="slot" className="mr-[6px] ml-2 text-[#909090]">Slot</label>
                  <Combo id="slot" value="1" disabled className="w-[43px]" font={sans} />
                </div>
              </div>
              <div className={`mt-[10px] flex h-[73px] overflow-hidden bg-white px-px pb-px ${sunken}`}>
                <div className="min-w-0 flex-1 overflow-hidden border-t border-t-[#404040]">
                  <table className="w-full table-fixed border-separate border-spacing-0 text-left whitespace-pre">
                    <thead>
                      <tr className="h-[17px] bg-[#d4d0c8]">
                        {columns.map((c) => (
                          <th key={c.name} className={`border-r border-b border-r-[#404040] border-b-[#404040] py-0 pb-px pl-[6px] leading-[14px] font-normal ${c.width}`}>
                            <span className="flex justify-between pr-[6px]">
                              {c.name}
                              {c.name === "PARTNUMBER" && (
                                <svg viewBox="0 0 9 9" className="mt-[3px] h-[9px] w-[9px]" aria-hidden="true">
                                  <path d="M.5 1h8L4.500 8z" fill="none" stroke="#808080" />
                                  <path d="M8.500 1L4.500 8" stroke="#fff" />
                                </svg>
                              )}
                            </span>
                          </th>
                        ))}
                      </tr>
                    </thead>
                    <tbody>
                      <tr className="h-[18px] bg-[#e2dfd8]">
                        {columns.map((c) => <td key={c.name} className="border-r border-r-[#404040] p-0" />)}
                      </tr>
                      <tr className="h-6 bg-[#0a246a] text-white">
                        {rowA.map((v, i) => <td key={i} className="py-0 pl-[6px] leading-4">{v}</td>)}
                      </tr>
                      <tr className="h-6">
                        {rowB.map((v, i) => <td key={i} className="py-0 pl-[6px] leading-4">{v}</td>)}
                      </tr>
                    </tbody>
                  </table>
                </div>
                <div className={`flex w-4 flex-col pt-px ${dither}`}>
                  <button aria-label="Scroll up" className={`flex h-4 items-center justify-center bg-[#d4d0c8] ${raised}`}><Arrow dir="up" /></button>
                  <div className={`h-2 bg-[#d4d0c8] ${raised}`} />
                  <div className="flex-1" />
                  <button aria-label="Scroll down" className={`flex h-4 items-center justify-center bg-[#d4d0c8] ${raised}`}><Arrow /></button>
                </div>
              </div>
              <div className="mt-[9px] mb-2 flex gap-[9px] pl-[92px] leading-[14px]">
                <div className={`w-[204px] ${thinSunken}`}>Configuration: test_Lib_11111.dbc</div>
                <div className={`w-[206px] ${thinSunken}`}>Filter: None</div>
                <div className={`flex-1 text-right ${thinSunken}`}>Matches: 8</div>
              </div>
            </div>
            <div className="flex w-[37px] shrink-0 flex-col items-center pt-[31px]">
              <IconButton name="dropDown" />
              <Groove />
              <IconButton name="addRight" />
              <IconButton name="swapRight" />
              <Groove />
              <IconButton name="pageA" />
              <IconButton name="pageB" />
              <IconButton name="pageC" />
            </div>
          </div>
          <div className="flex w-[197px] shrink-0 flex-col border-l-2 border-l-[#303030] pt-[9px] pl-[9px]">
            <svg viewBox="0 0 176 121" className="h-[121px] w-[176px] bg-black" role="img" aria-label="Symbol preview">
              <path d="M48.500 0v121M128.500 0v121" stroke="#fff" />
              <rect x="53.500" y="0.500" width="67" height="120" fill="none" stroke="#108018" />
              <Pins pins={[{ x: 48, y: 39, t: "F3" }, { x: 115, y: 39, t: "F8" }, { x: 48, y: 77, t: "F6" }, { x: 115, y: 77, t: "F4" }]} />
            </svg>
            <Combo id="symbol" label="Symbol" value="symbol001:t001.1" className="mt-[9px] w-[175px]" font={`text-[12px] ${sans}`} />
          </div>
        </div>
        <div className="flex h-4 border-t border-t-black">
          <button aria-label="Previous tab" className={`flex w-[17px] items-center justify-center ${raised}`}><Arrow dir="left" muted /></button>
          <button aria-label="Next tab" className={`flex w-[17px] items-center justify-center ${raised}`}><Arrow dir="right" muted /></button>
          <button className={`flex items-center gap-1 bg-black pr-px pl-px text-[11px] font-bold [clip-path:polygon(0_0,100%_0,calc(100%-6px)_100%,6px_100%)] ${sans}`}>
            <span className="flex h-[15px] items-start bg-white px-2 leading-[15px] whitespace-pre [clip-path:polygon(0_0,100%_0,calc(100%-6px)_calc(100%-1px),6px_calc(100%-1px))]">Search: 电阻</span>
          </button>
        </div>
      </div>
    </section>
  );
}

function Taskbar() {
  return (
    <footer className="mt-[5px] flex h-8 items-center border-t border-t-white pl-px shadow-[0_-1px_0_#808080]">
      <button className={`flex h-[23px] w-[47px] items-center gap-[2px] ${raised}`}>
        <Icon name="flag" /><span className="text-[12px]">开始</span>
      </button>
      <span className="mx-2 h-5 w-[3px] border-r border-l border-r-[#808080] border-l-white" />
      <button aria-label="Internet Explorer" className="mr-[6px]"><Icon name="ie" /></button>
      <button aria-label="Show desktop"><Icon name="desk" /></button>
      <span className="ml-[11px] mr-[3px] h-5 w-[3px] border-r border-l border-r-[#808080] border-l-white" />
      <div className="flex min-w-0 flex-1 gap-[3px]">
        {tasks.map((t) => (
          <button
            key={t.icon}
            className={`flex h-[23px] w-40 min-w-0 items-center gap-1 px-[3px] whitespace-nowrap ${t.active ? `${sunken} ${dither}` : raised}`}
          >
            <Icon name={t.icon} /><span>{t.text}</span>
          </button>
        ))}
      </div>
      <div className="mr-1"><Icon name="keyboard" /></div>
      <div className={`mr-1 flex h-[22px] items-center gap-[3px] px-1 ${thinSunken}`}>
        <Icon name="penguin" /><Icon name="phone" /><Icon name="screens" />
        <time className="pl-[2px]">17:40</time>
      </div>
    </footer>
  );
}

function Overlay() {
  return (
    <div className="pointer-events-none absolute right-0 bottom-[5px] h-[49px] w-[155px] bg-white/30">
      <div className="absolute top-[6px] right-0 flex h-4 w-[118px] items-center gap-[3px] bg-white/70 pl-px">
        <svg viewBox="0 0 116 16" className="h-4 w-[116px]" aria-hidden="true">
          <rect x="2" y="1" width="14" height="14" rx="2" fill="#f06030" />
          <path d="M12.500 4.500C9 2.500 5 4 6 6.500s6 1 6 4-5 3-7 1" fill="none" stroke="#fff" strokeWidth="2" />
          <path d="M22 4.500h11v5H22zM27.500 1v14" fill="none" stroke="#2080d0" strokeWidth="2" />
          <path d="M45 3c-3 4-2 9-6 8 3 4 9 2 9-3 0-2-1-4-3-5z" fill="#3080c0" />
          <path d="M56 4l2 3M60 5l-1 2M57 12c2 1 3-1 3-3" fill="none" stroke="#405878" strokeWidth="1.500" />
          <path d="M68 4h13v9H68z" fill="#2878c8" />
          <path d="M69 7.500h11M69 10h11" stroke="#fff" strokeDasharray="2 1" />
          <path d="M87 6h2v5h6V7h3v6H87zM91 2h3v3h-3z" fill="#505050" />
          <path d="M102 13l7-7c-1-3 1-5 4-4l-2 2 1 2 2-1c0 3-2 4-4 3l-6 7z" fill="#4090e0" />
        </svg>
      </div>
      <div className={`absolute top-0 left-5 text-[22px] leading-[26px] whitespace-nowrap text-[#404040]/60 ${sans}`}>嵌入式公社</div>
      <div className="absolute top-[26px] right-[22px] left-[15px] h-[2px] bg-[#505050]/70" />
      <div className={`absolute top-[31px] left-[26px] text-[18px] leading-5 text-[#404040]/60 ${sans}`}>embcom.net</div>
    </div>
  );
}

export default function App() {
  return (
    <div className={`relative flex min-h-screen flex-col overflow-hidden bg-[#d4d0c8] text-[10px] leading-4 text-black ${mono}`}>
      <TitleBar />
      <Toolbars />
      <div className="flex flex-1">
        <Navigator />
        <div className="w-1 border-l border-l-white" />
        <Editor />
      </div>
      <div className="h-[6px] border-t border-t-white" />
      <DataBook />
      <Taskbar />
      <Overlay />
    </div>
  );
}
